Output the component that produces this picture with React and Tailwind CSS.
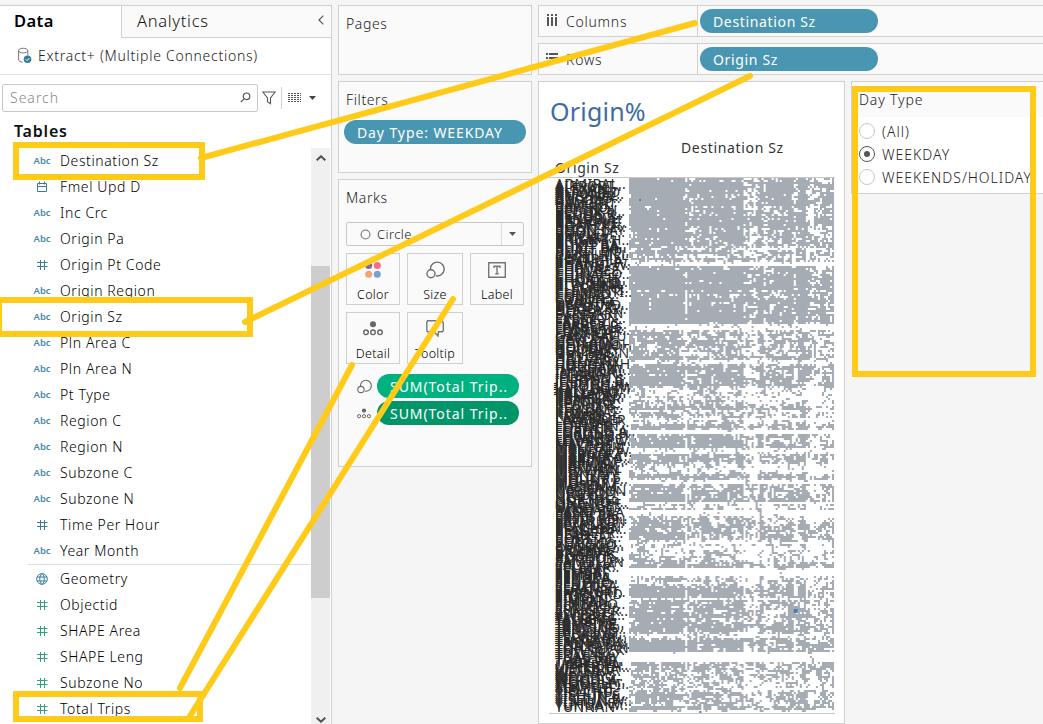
import React from "react";

const DIMENSIONS = [
  ["abc", "Destination Sz"], ["date", "Fmel Upd D"], ["abc", "Inc Crc"], ["abc", "Origin Pa"],
  ["num", "Origin Pt Code"], ["abc", "Origin Region"], ["abc", "Origin Sz"], ["abc", "Pln Area C"],
  ["abc", "Pln Area N"], ["abc", "Pt Type"], ["abc", "Region C"], ["abc", "Region N"],
  ["abc", "Subzone C"], ["abc", "Subzone N"], ["num", "Time Per Hour"], ["abc", "Year Month"],
];
const MEASURES = [
  ["geo", "Geometry"], ["num", "Objectid"], ["num", "SHAPE Area"], ["num", "SHAPE Leng"],
  ["num", "Subzone No"], ["num", "Total Trips"],
];

const SUBZONES = "ADMIRAL..,AIRPORT..,ALEXAN..,ALEXAN..,ALJUNIED,ANAK BU..,ANCHOR..,ANG MO..,ANSON,BALESTI..,BANGKIT,BAYFRO..,BAYSHO..,BEDOK N..,BEDOK R..,BEDOK S..,BENCO..,BENDEM..,BIDADARI,BISHAN E..,BOAT QU..,BOON KE..,BOON LAY,BOON TE..,BOULEV..,BRICKL..,BRICKW..,BRIGHT H..,BUGIS,BUKIT BA..,BUKIT BA..,BUKIT BA..,BUKIT HO..,BUKIT ME..,CAIRNHILL,CECIL,CENTRAL..,CHANGI A..,CHANGI P..,CHANGI W..,CHATS..,CHENG S..,CHIN BEE,CHINA SQ..,CHINAT..,CHOA CH..,CHOA CH..,CHONG B..,CITY HALL,CITY TER..,CLARKE Q..,CLEMENTI,CLEMENTI..,COMMO..,COMPA..,CORON..,CRAWFO..,DAIRY FA..,DEFU IND..,DEPOT R..,DHOBY G..,DOVER,DUNEARN,EAST CO..,EVERTON..,FABER,FAJAR,FARRER C..,FARRER P..,FERNVALE,FLORA DR..,FORT CA..,FRANKEL,GALI BATU,GARDEN,GEYLANG..,GEYLANG..,GHIM MOH,GOMBAK,GOODW..,GUILIN,GUL BASIN,HENDER..,HILLCRE..,HILLVIEW,HOLLAN..,HONG KAH,HOUGAN..,HOUGAN..,INSTITUTI..,INTERNA..,ISTANA N..,JELEBU,JELAPAN..,JURONG G..,JURONG P..,JURONG R..,JURONG W..,KAKI BUKIT,KALLANG..,KALLANG..,KAMPON..,KAMPON..,KANGKAR,KATONG,KEAT HO..,KEBUN B..,KEMBAN..,KHATIB,KIM KEAT,KOVAN,KRANJI,LAKESIDE,LAVENDER,LEEDON P..,LENTOR,LITTLE IN..,LOEWEN,LORONG A..,LORONG 8..,LORONG H..,LOWER S..,LOYANG E..,LOYANG W..,MACKEN..,MACPHE..,MALCOLM,MANDAI E..,MANDAI W..,MARGAR..,MARINA C..,MARINA S..,MARINE P..,MARITIM..,MARYM..,MATILDA,MAXWELL,MEI CHIN,MIDVIEW,MONK'S..,MOULM..,MOUNT E..,MOUNT P..,MOUNT..,MUSEUM,NASSIM,NATIONA..,NEE SOON,NEWTON,NICOLL,NORTHL..,NORTHS..,ONE NOR..,ONE TREE..,ORANGE..,OXLEY,PANDAN,PANG SUA,PASIR PA..,PASIR RIS..,PASIR RIS..,PATERSON,PAYA LEB..,PEARL'S..,PEI CHUN,PENG SIA..,PHILLIP,PIONEER..,PLAB,PLANTAT..,PORT,POTONG..,PUNGGO..,PUNGGO..,QUEENS..,REDHILL,RIDOUT,RIVERVA..,ROBERTS..,ROCHOR..,SAFTI,SAMULUN,SAUJANA,SELETAR..,SELEGIE,SEMBA..,SEMBA..,SEMBA..,SENGKA..,SENGKA..,SENJA,SENOKO..,SENTOSA,SERANG..,SERANG..,SHANGRI..,SHIPYARD,SIGLAP,SIMEI,SIMPAN..,SIMPAN..,SINGAPO..,SOMERS..,SPRINGL..,SUNGEI R..,SUNSET..,SWISS CL..,TAGORE,TAI SENG,TAMAN J..,TAMPINE..,TAMPINE..,TANGLIN..,TANJONG..,TANJONG..,TEBAN G..,TECK WH..,TELOK BL..,TENGAH,THOMSON,TIONG BA..,TOA PAY..,TOH GUAN,TOH TUCK,TOWNS..,TRAFAL..,TUAS BAY,TUAS NO..,TUAS VIE..,TYERSALL,UPPER PA..,UPPER TH..,VICTORIA,WATERW..,WENYA,WEST CO..,WOODG..,WOODLA..,WOODLA..,WOODLEI..,XILIN,YEW TEE,YIO CHU..,YIO CHU..,YISHUN C..,YISHUN E..,YISHUN S..,YISHUN W..,YUHUA E..,YUHUA W..,YUNNAN".split(",");

// Fill density of the mark grid by vertical position: [end y, density]
const BANDS = [
  [54, 0.87], [62, 0.68], [68, 0.8], [72, 0.45], [76, 0.8], [80, 0.5], [84, 0.7], [87, 0.12],
  [112, 0.92], [118, 0.75], [145, 0.9], [151, 0.12], [172, 0.78], [182, 0.76], [186, 0.16],
  [207, 0.9], [228, 0.5], [232, 0.8], [246, 0.5], [252, 0.82], [256, 0.02], [269, 0.9], [275, 0.22],
  [286, 0.88], [296, 0.48], [302, 0.7], [306, 0.12], [324, 0.8], [326, 0.1], [332, 0.6], [337, 0.1],
  [362, 0.78], [372, 0.42], [384, 0.55], [390, 0.82], [398, 0.06], [408, 0.66], [419, 0.94], [422, 0.25],
  [456, 0.8], [460, 0.24], [473, 0.92], [484, 0.03], [494, 0.84], [513, 0.52], [531, 0.78], [535, 0.5],
];

function marksPath() {
  let s = 71;
  const rnd = () => {
    s = (s * 1664525 + 1013904223) % 4294967296;
    return s / 4294967296;
  };
  const cols = [];
  for (let c = 0; c < 102; c++) {
    const base = c < 28 ? 0.95 : c < 52 ? 0.88 : c < 58 ? 0.8 : c < 72 ? 0.64 : c < 88 ? 0.84 : 0.64;
    cols.push(base + (rnd() - 0.5) * 0.36);
  }
  [28, 57, 62, 82, 91].forEach((c) => { cols[c] = 0.38; });
  [46, 49, 65, 86, 101].forEach((c) => { cols[c] = 1; });
  let d = "";
  let above = new Array(102).fill(false);
  for (let r = 0; r < 267; r++) {
    const y = r * 2;
    const base = BANDS.find((b) => y < b[0])[1];
    const row = base + (rnd() - 0.5) * 0.36 * (base > 0.3 ? 1 : 0.2);
    const now = [];
    for (let c = 0; c < 102; c++) {
      const upper = y < 150 ? 0.12 : 0;
      const near = (now[c - 1] ? 0.07 : -0.1) + (above[c] ? 0.08 : -0.08);
      const diagonal = y > 205 && Math.abs(c - (41 + (y - 205) * 0.181)) < 0.7 && rnd() < 0.7;
      now[c] = rnd() < row * (cols[c] + upper) + near * (base > 0.3 ? 1 : 0.3) || diagonal;
      if (now[c]) d += `M${c * 2} ${y}h2v2h-2z`;
    }
    above = now;
  }
  return d;
}
const MARKS = marksPath();

function FieldIcon({ type, color }) {
  if (type === "abc") return <span className="text-[9.5px] font-semibold tracking-[-0.1px] text-[#4a8ba6]">Abc</span>;
  return (
    <svg width="12" height="12" viewBox="0 0 12 12" fill="none" stroke={color} strokeWidth="1">
      {type === "num" && <path d="M4.5 1v10M8.5 1v10M1 3.5h10.5M1 7.5h10.5" />}
      {type === "date" && <path d="M1.5 2.5h9v8h-9zM1.5 5.5h9M3.5 .5v3M8.5 .5v3" />}
      {type === "geo" && <path d="M6 .7a5.3 5.3 0 1 0 0 10.6A5.3 5.3 0 0 0 6 .7zM1 4h10M1 8h10M6 .7C3 3 3 9 6 11.3M6 .7c3 2.3 3 8.3 0 10.6" />}
    </svg>
  );
}

function Field({ type, name, measure }) {
  return (
    <div className="flex h-[26px] items-center pl-[32px]">
      <span className="flex w-[20px] shrink-0 justify-center">
        <FieldIcon type={type} color={measure && type === "num" ? "#35a178" : "#377d9b"} />
      </span>
      <span className="ml-[8px] text-[14px] leading-[24px] tracking-[0.6px] text-black">{name}</span>
    </div>
  );
}

function SizeIcon({ small }) {
  return (
    <svg width={small ? 15 : 19} height={small ? 15 : 18} viewBox="0 0 19 18" fill="none" stroke="#6b6b6b" strokeWidth="1.4">
      <path d="M4.4 8.5A6.9 6.9 0 1 1 10 14.8" />
      <circle cx="5" cy="12.8" r="4" />
    </svg>
  );
}

function DetailIcon({ small }) {
  return (
    <svg width={small ? 14 : 20} height={small ? 11 : 15} viewBox="0 0 20 15" fill="none" stroke="#666" strokeWidth="1.4">
      <circle cx="10" cy="3.3" r="3" fill="#666" stroke="none" />
      <circle cx="3" cy="11.3" r="2.3" /><circle cx="10" cy="11.3" r="2.3" /><circle cx="17" cy="11.3" r="2.3" />
    </svg>
  );
}

function MarkButton({ label, className, children }) {
  return (
    <div className={`flex h-[52px] flex-col items-center border border-[#cfcfcf] bg-[#fafafa] ${className}`}>
      <div className="flex h-[33px] items-center justify-center pb-[2px]">{children}</div>
      <div className="text-[12.5px] leading-[16px] tracking-[0.3px] text-black">{label}</div>
    </div>
  );
}

function Radio({ label, on }) {
  return (
    <div className="flex h-[23px] items-center">
      <span className={`mb-px flex size-[16px] shrink-0 items-center justify-center rounded-full border bg-white ${on ? "border-[#555]" : "border-[#c8c8c8]"}`}>
        {on && <span className="size-[6px] rounded-full bg-[#555]" />}
      </span>
      <span className="ml-[7px] whitespace-nowrap text-[14px] leading-[20px] tracking-[1px] text-[#222]">{label}</span>
    </div>
  );
}

function Shelf({ icon, label, pill }) {
  return (
    <div className="flex h-[32px] border border-r-0 border-[#d0d0d0] bg-[#fafafa]">
      <div className="flex w-[159px] shrink-0 items-center border-r border-[#d0d0d0] pl-[7px]">
        {icon}
        <span className="ml-[8px] text-[14px] tracking-[0.75px] text-[#222]">{label}</span>
      </div>
      <div className="ml-[2px] mt-[3px] flex h-[24px] w-[178px] items-center rounded-full bg-[#4996b2] pl-[13px] text-[14px] font-normal tracking-[0.65px] text-white">{pill}</div>
    </div>
  );
}

export default function App() {
  return (
    <div className="relative flex h-[724px] w-[1043px] overflow-hidden bg-[#f5f5f5] pt-[5px] font-['Noto_Sans','Open_Sans',sans-serif] text-[14px] font-light tracking-[0.6px] text-[#333]">
      <aside className="flex h-[719px] w-[332px] shrink-0 flex-col border-r border-t border-[#d0d0d0] bg-white">
        <div className="flex h-[32px]">
          <div className="w-[121px] pl-[14px] text-[16.5px] font-semibold leading-[30px] tracking-[0.4px] text-black">Data</div>
          <div className="flex flex-1 items-center justify-between border-b border-l border-[#d0d0d0] bg-[#fafafa] pl-[15px] pr-[7px]">
            <span className="text-[16.5px] tracking-[0.7px] text-[#111]">Analytics</span>
            <svg className="mb-[3px]" width="6" height="10" viewBox="0 0 6 10" fill="none" stroke="#555" strokeWidth="1.2"><path d="M5.3.6 1 5l4.3 4.4" /></svg>
          </div>
        </div>
        <div className="flex h-[37px] items-center border-b border-[#e0e0e0] pb-[2px] pl-[18px]">
          <svg width="14" height="17" viewBox="0 0 14 17" fill="none" stroke="#777" strokeWidth="1">
            <path d="M.6 3.6C.6.5 9.8.5 9.8 3.6S.6 6.7.6 3.6v9.2c0 1.3 1.8 2.2 4 2.3M9.8 3.6v5" />
            <circle cx="9.5" cy="12.3" r="3.8" fill="#377d9b" stroke="none" /><path d="m7.8 12.3 1.3 1.3 2.3-2.5" stroke="#fff" />
          </svg>
          <span className="ml-[6px] text-[14px] tracking-[0.73px] text-[#222]">Extract+ (Multiple Connections)</span>
        </div>
        <div className="mt-[9px] flex h-[28px] items-center pl-[2px]">
          <div className="flex h-[28px] w-[256px] items-center justify-between rounded-[2px] border border-[#c8c8c8] pb-[2px] pl-[7px] pr-[6px]">
            <span className="text-[14px] tracking-[1px] text-[#888]">Search</span>
            <svg width="11" height="11" viewBox="0 0 11 11" fill="none" stroke="#555" strokeWidth="1.2"><circle cx="6.5" cy="4.3" r="3.3" /><path d="M4 6.8.8 10" /></svg>
          </div>
          <svg className="ml-[4px]" width="14" height="14" viewBox="0 0 14 14" fill="none" stroke="#555" strokeWidth="1.1"><path d="M.8 1h12.4L8.5 7v5.8l-3-2V7z" /></svg>
          <div className="ml-[5px] h-[22px] w-px bg-[#d0d0d0]" />
          <svg className="ml-[6px]" width="13" height="10" viewBox="0 0 13 10" stroke="#555" strokeWidth="1"><path d="M0 .5h13M0 2.5h13M0 4.5h13M0 6.5h13M0 8.5h13" strokeDasharray="2 1" /></svg>
          <svg className="ml-[8px]" width="7" height="4" viewBox="0 0 7 4"><path d="M0 0h7L3.5 4z" fill="#444" /></svg>
        </div>
        <div className="h-[36px] pl-[14px] pt-[7px] text-[16px] font-semibold leading-[24px] tracking-[0.8px] text-[#111]">Tables</div>
        <div className="flex min-h-0 flex-1">
          <div className="w-[311px] overflow-hidden">
            {DIMENSIONS.map(([t, n]) => <Field key={n} type={t} name={n} />)}
            <div className="ml-[28px] mr-px h-[2px] border-t border-[#dcdcdc]" />
            {MEASURES.map(([t, n]) => <Field key={n} type={t} name={n} measure />)}
          </div>
          <div className="flex w-[19px] flex-col items-center bg-[#f0f0f0]">
            <svg className="mt-[7px] shrink-0" width="10" height="6" viewBox="0 0 10 6" fill="none" stroke="#505050" strokeWidth="2"><path d="m.7 5.3 4.3-4 4.3 4" /></svg>
            <div className="mt-[105px] h-[332px] w-[19px] shrink-0 bg-[#cdcdcd]" />
            <svg className="mt-[119px] shrink-0" width="10" height="6" viewBox="0 0 10 6" fill="none" stroke="#505050" strokeWidth="2"><path d="m.7.7 4.3 4 4.3-4" /></svg>
          </div>
        </div>
      </aside>

      <section className="ml-[6px] flex w-[194px] shrink-0 flex-col text-[#222]">
        <div className="h-[70px] border border-[#d0d0d0] bg-[#fafafa] pl-[7px] pt-[8px] leading-[20px]">Pages</div>
        <div className="mt-[6px] h-[92px] border border-[#d0d0d0] bg-[#fafafa] pt-[8px]">
          <div className="pl-[7px] leading-[20px]">Filters</div>
          <div className="ml-[5px] mt-[10px] flex h-[24px] w-[182px] items-center rounded-full bg-[#4996b2] pl-[13px] font-normal tracking-[0.9px] text-white">Day Type: WEEKDAY</div>
        </div>
        <div className="mt-[6px] h-[288px] border border-[#d0d0d0] bg-[#fafafa] px-[7px] pt-[8px]">
          <div className="leading-[20px]">Marks</div>
          <div className="mt-[14px] flex h-[24px] w-[178px] items-center rounded-[2px] border border-[#c8c8c8] pl-[13px]">
            <svg width="11" height="11" viewBox="0 0 11 11"><circle cx="5.5" cy="5.5" r="4.4" fill="none" stroke="#888" strokeWidth="1.3" /></svg>
            <span className="ml-[6px] pt-px text-[13px] tracking-[0.4px]">Circle</span>
            <span className="ml-auto flex h-full w-[22px] items-center justify-center border-l border-[#ddd]"><svg width="7" height="4" viewBox="0 0 7 4"><path d="M0 0h7L3.5 4z" fill="#555" /></svg></span>
          </div>
          <div className="mt-[7px] flex">
            <MarkButton label="Color" className="w-[54px]">
              <svg width="16" height="16" viewBox="0 0 16 16"><circle cx="3.7" cy="3.5" r="3.5" fill="#806a99" /><circle cx="12.3" cy="3.5" r="3.5" fill="#f86f82" /><circle cx="3.7" cy="12.3" r="3.5" fill="#f3a477" /><circle cx="12.3" cy="12.3" r="3.5" fill="#7ba1cd" /></svg>
            </MarkButton>
            <MarkButton label="Size" className="ml-[7px] w-[56px]"><SizeIcon /></MarkButton>
            <MarkButton label="Label" className="ml-[7px] w-[54px]">
              <svg width="18" height="16" viewBox="0 0 18 16" fill="none" stroke="#777" strokeWidth="1.4"><path d="M.7.7h16.6v14.6H.7zM6 6V4.2h6V6M9 4.2v7.6M7.3 11.8h3.4" /></svg>
            </MarkButton>
          </div>
          <div className="mt-[7px] flex">
            <MarkButton label="Detail" className="w-[54px]"><DetailIcon /></MarkButton>
            <MarkButton label="Tooltip" className="ml-[7px] w-[56px]">
              <svg width="18" height="17" viewBox="0 0 18 17" fill="none" stroke="#777" strokeWidth="1.4"><path d="M1.5.8h15v1l.8.7v8l-.8 1.2h-4L12 16l-4-4.3H1.5L.8 10.5V2.5z" /></svg>
            </MarkButton>
          </div>
          <div className="mt-[10px] flex items-center">
            <span className="flex w-[31px] justify-center pl-[5px]"><SizeIcon small /></span>
            <div className="flex h-[24px] w-[142px] items-center rounded-full bg-[#00b180] pl-[13px] font-normal tracking-[0.95px] text-white">SUM(Total Trip..</div>
          </div>
          <div className="mt-[3px] flex items-center">
            <span className="flex w-[31px] justify-center pl-[5px]"><DetailIcon small /></span>
            <div className="flex h-[24px] w-[142px] items-center rounded-full bg-[#00966a] pl-[13px] font-normal tracking-[0.95px] text-white">SUM(Total Trip..</div>
          </div>
        </div>
      </section>

      <main className="ml-[6px] flex min-w-0 flex-1 flex-col">
        <Shelf label="Columns" pill="Destination Sz" icon={<svg width="12" height="14" viewBox="0 0 12 14" fill="#555"><path d="M1 0h2v2H1zM5 0h2v2H5zM9 0h2v2H9zM1 3h2v9H1zM5 3h2v9H5zM9 3h2v9H9z" /></svg>} />
        <div className="h-[6px]" />
        <Shelf label="Rows" pill="Origin Sz" icon={<svg width="12" height="12" viewBox="0 0 12 12" fill="#555"><path d="M0 0h2v2H0zM0 4h2v2H0zM0 8h2v2H0zM3 0h9v2H3zM3 4h9v2H3zM3 8h9v2H3z" /></svg>} />
        <div className="mt-[6px] flex">
          <div className="flex h-[643px] w-[307px] shrink-0 flex-col border border-[#d0d0d0] bg-white">
            <div className="h-[54px] pl-[11px] pt-[12px] text-[25px] font-normal leading-[34px] tracking-[0.2px] text-[#3c6ca6]">Origin%</div>
            <div className="pl-[142px] font-normal leading-[24px] tracking-[0.65px] text-[#333]">Destination Sz</div>
            <div className="h-[17px] pl-[16px] font-normal leading-[16px] tracking-[0.6px] text-[#333]">Origin Sz</div>
            <div className="ml-[10px] flex h-[537px] w-[286px] border-y border-[#c8c8c8]">
              <div className="flex h-[535px] w-[80px] shrink-0 flex-col justify-between pb-[5px] pl-[6px] pt-[5px] text-[14px] font-normal tracking-[0.2px] text-[#2b2b2b]">
                {SUBZONES.map((n, i) => <div key={i} className="flex h-0 items-center whitespace-nowrap">{n}</div>)}
              </div>
              <svg className="shrink-0" width="205" height="535" viewBox="0 0 204 535" preserveAspectRatio="none">
                <path d={MARKS} fill="#a6acb3" />
                <path d="M164 431h4v4h-4zM10 21h2v2h-2zM70 533h2v2h-2z" fill="#4c7fb4" />
              </svg>
            </div>
          </div>
          <div className="ml-[6px] h-[113px] flex-1 border border-r-0 border-[#d0d0d0] bg-white">
            <div className="h-[35px] bg-[#fafafa] pl-[7px] pt-[8px] leading-[20px] tracking-[0.85px] text-[#222]">Day Type</div>
            <div className="w-[190px] pl-[7px] pt-[3px]">
              <Radio label="(All)" /><Radio label="WEEKDAY" on /><Radio label="WEEKENDS/HOLIDAY" />
            </div>
          </div>
        </div>
      </main>

      <svg className="pointer-events-none absolute left-0 top-0" width="1043" height="724" viewBox="0 0 1043 724" fill="none" stroke="#ffca18" strokeWidth="6">
        <path d="M16 145h186v32H16zM-1 300h251v34H-1zM16 694h184v25H16zM855 89h178v285H855z" />
        <path d="M201 158 695 23M245 322 750 76M180 688 352 365M190 716 453 299" strokeLinecap="round" />
      </svg>
    </div>
  );
}
